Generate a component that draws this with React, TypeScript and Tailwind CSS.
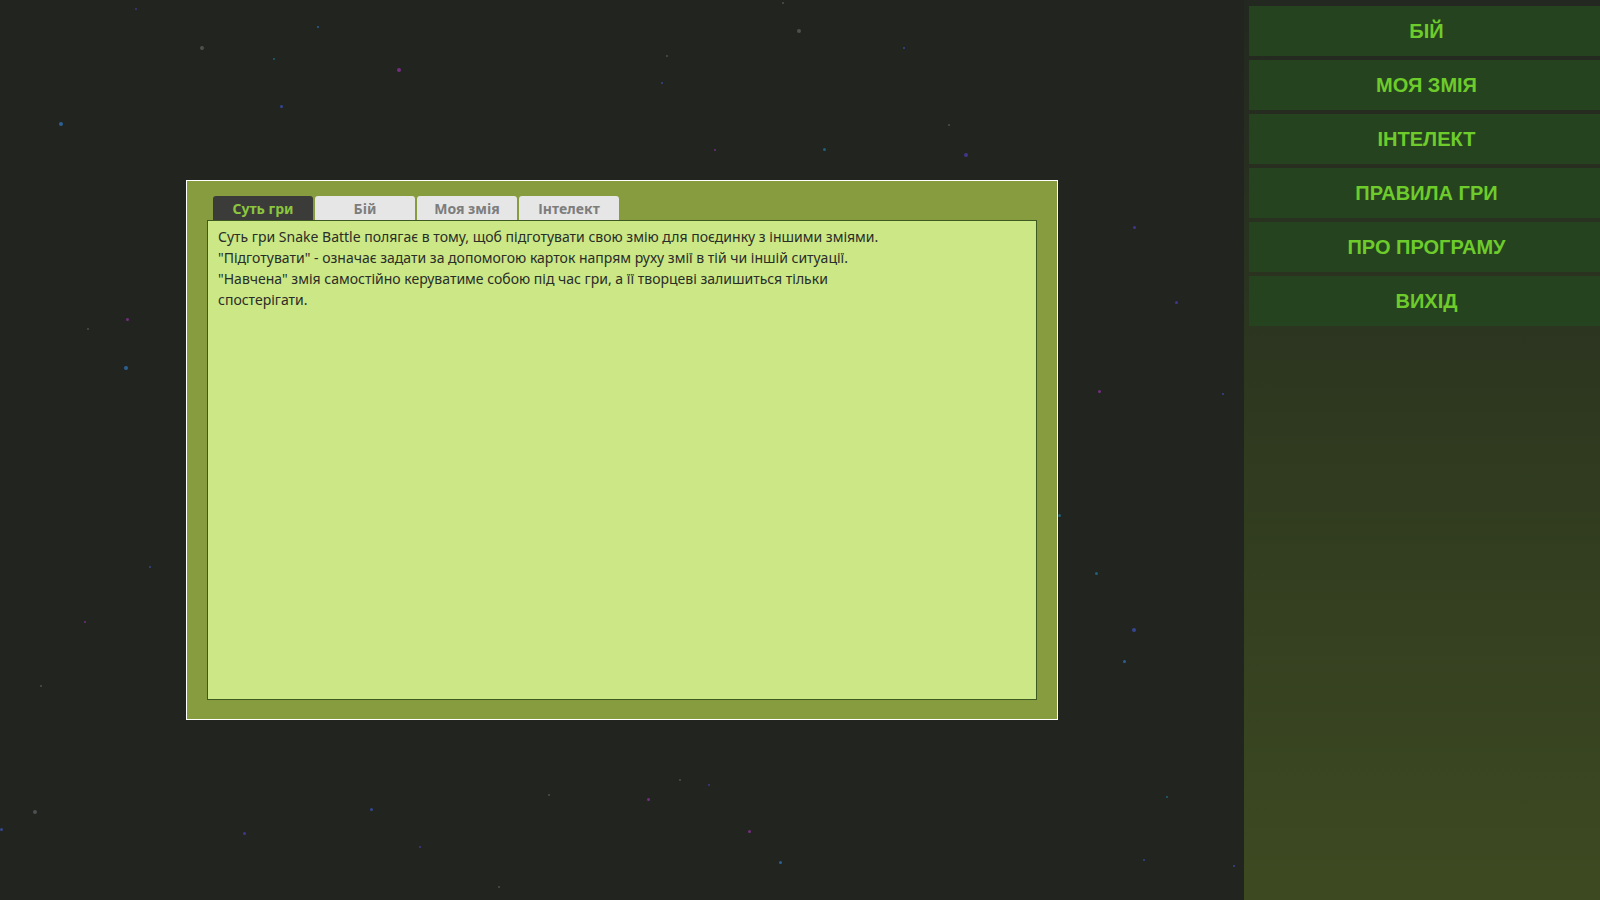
import React from 'react';

type Star = { x: number; y: number; s: number; c: string };

function makeStars(): Star[] {
  let seed = 7;
  const rnd = () => {
    seed = (seed * 16807) % 2147483647;
    return seed / 2147483647;
  };
  const colors = ['#2f6fb0', '#4b3aa8', '#1f6f8a', '#8a2f9a', '#3a4fb0', '#5a5a5a'];
  const out: Star[] = [];
  for (let i = 0; i < 90; i++) {
    out.push({
      x: Math.floor(rnd() * 1600),
      y: Math.floor(rnd() * 900),
      s: rnd() < 0.2 ? 4 : rnd() < 0.5 ? 3 : 2,
      c: colors[Math.floor(rnd() * colors.length)],
    });
  }
  return out;
}

const stars = makeStars();

const menu = ['БІЙ', 'МОЯ ЗМІЯ', 'ІНТЕЛЕКТ', 'ПРАВИЛА ГРИ', 'ПРО ПРОГРАМУ', 'ВИХІД'];
const tabs = ['Суть гри', 'Бій', 'Моя змія', 'Інтелект'];

export default function App() {
  return (
    <div className="relative flex h-[900px] w-full overflow-hidden bg-[#21241f]">
      {stars.map((st, i) => (
        <div
          key={i}
          className="absolute rounded-full opacity-80"
          style={{ left: st.x, top: st.y, width: st.s, height: st.s, background: st.c }}
        />
      ))}

      <div className="relative flex-1 pl-[186px] pt-[180px]">
        <div className="flex h-[540px] w-[872px] flex-col border border-white bg-[#879c3e] px-[20px] pb-[19px] pt-[15px]">
          <div className="ml-[6px] flex h-[24px] gap-[2px]">
            {tabs.map((t, i) => (
              <div
                key={t}
                className={`flex w-[100px] items-center justify-center rounded-t-[3px] text-[14px] font-bold ${
                  i === 0 ? 'bg-[#3b3c39] text-[#8cc63f]' : 'bg-[#e6e6e6] text-[#7d7d7d]'
                }`}
                style={{ fontFamily: '"Noto Sans", sans-serif' }}
              >
                {t}
              </div>
            ))}
          </div>
          <div
            className="flex-1 border border-[#3e5a20] bg-[#cbe786] px-[10px] pt-[5px] text-[14px] leading-[21px] text-[#2a2d28]"
            style={{ fontFamily: '"Noto Sans", sans-serif' }}
          >
            <p>Суть гри Snake Battle полягає в тому, щоб підготувати свою змію для поєдинку з іншими зміями.</p>
            <p>"Підготувати" - означає задати за допомогою карток напрям руху змії в тій чи іншій ситуації.</p>
            <p>"Навчена" змія самостійно керуватиме собою під час гри, а її творцеві залишиться тільки</p>
            <p>спостерігати.</p>
          </div>
        </div>
      </div>

      <div className="relative flex w-[356px] flex-col bg-gradient-to-b from-[#232820] via-[#2f3a1f] to-[#3d4a21] pl-[5px] pt-[6px]">
        {menu.map((m) => (
          <div
            key={m}
            className="mb-[4px] flex h-[50px] items-center justify-center bg-[#26431f] pl-[4px] text-[20px] font-bold text-[#6dcc2b]"
            style={{ fontFamily: '"Liberation Sans", Arial, sans-serif' }}
          >
            {m}
          </div>
        ))}
      </div>
    </div>
  );
}
